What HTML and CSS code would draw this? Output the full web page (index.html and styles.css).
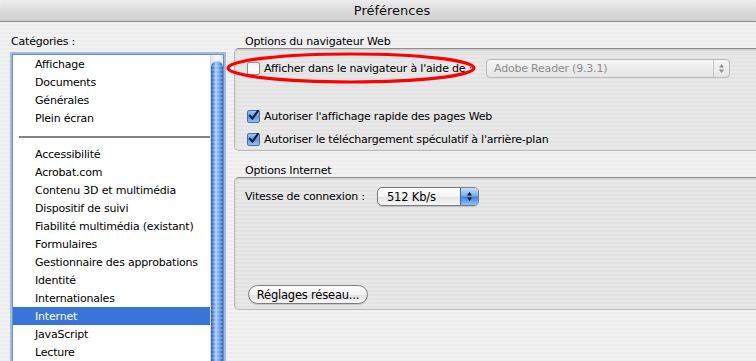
FILE: index.html
```html
<!DOCTYPE html>
<html lang="fr">
<head>
<meta charset="utf-8">
<title>Préférences</title>
<link rel="stylesheet" href="styles.css">
</head>
<body>
<div class="window">
  <div class="titlebar"><span class="title">Préférences</span></div>
  <div class="content">
    <div class="left">
      <div class="label">Catégories :</div>
      <div class="listbox">
        <ul class="items">
          <li>Affichage</li>
          <li>Documents</li>
          <li>Générales</li>
          <li>Plein écran</li>
          <li class="sep"><span></span></li>
          <li>Accessibilité</li>
          <li>Acrobat.com</li>
          <li>Contenu 3D et multimédia</li>
          <li>Dispositif de suivi</li>
          <li>Fiabilité multimédia (existant)</li>
          <li>Formulaires</li>
          <li>Gestionnaire des approbations</li>
          <li>Identité</li>
          <li>Internationales</li>
          <li class="selected">Internet</li>
          <li>JavaScript</li>
          <li>Lecture</li>
        </ul>
        <div class="scroll"><div class="thumb"></div></div>
      </div>
    </div>
    <div class="right">
      <div class="label group-label">Options du navigateur Web</div>
      <div class="group group-web">
        <div class="row row-first">
          <label class="check">
            <span class="box"></span>
            <span>Afficher dans le navigateur à l'aide de :</span>
          </label>
          <div class="popup popup-disabled">
            <span class="popup-text">Adobe Reader (9.3.1)</span>
            <span class="popup-arrows">
              <svg width="7" height="11" viewBox="0 0 7 11"><path d="M3.5 1 L6 4.5 H1 Z M3.5 10 L6 6.5 H1 Z" fill="#8f8f8f"/></svg>
            </span>
          </div>
        </div>
        <label class="check row row-second">
          <span class="box checked"><svg width="13" height="13" viewBox="0 0 13 13"><path d="M2.8 6.6 L5.4 9.6 L11 1.8" fill="none" stroke="#10203a" stroke-width="2.1" stroke-linecap="round" stroke-linejoin="round"/></svg></span>
          <span>Autoriser l'affichage rapide des pages Web</span>
        </label>
        <label class="check row row-third">
          <span class="box checked"><svg width="13" height="13" viewBox="0 0 13 13"><path d="M2.8 6.6 L5.4 9.6 L11 1.8" fill="none" stroke="#10203a" stroke-width="2.1" stroke-linecap="round" stroke-linejoin="round"/></svg></span>
          <span>Autoriser le téléchargement spéculatif à l'arrière-plan</span>
        </label>
      </div>
      <div class="label group-label group-label-2">Options Internet</div>
      <div class="group group-net">
        <div class="row speed-row">
          <span class="speed-label">Vitesse de connexion :</span>
          <div class="popup popup-active">
            <span class="popup-text">512 Kb/s</span>
            <span class="popup-arrows blue">
              <svg width="7" height="11" viewBox="0 0 7 11"><path d="M3.5 1 L6 4.5 H1 Z M3.5 10 L6 6.5 H1 Z" fill="#111"/></svg>
            </span>
          </div>
        </div>
        <button class="btn">Réglages réseau...</button>
      </div>
    </div>
  </div>
  <svg class="annotation" width="254" height="34" viewBox="0 0 254 34"><ellipse cx="126" cy="16" rx="123" ry="14" fill="none" stroke="#ff0000" stroke-width="3.2"/></svg>
</div>
</body>
</html>
```
FILE: styles.css
```css
html, body {
  margin: 0;
  padding: 0;
  width: 756px;
  height: 361px;
  overflow: hidden;
  background: #ffffff;
}

.window {
  position: relative;
  width: 756px;
  height: 361px;
  overflow: hidden;
  font-family: "DejaVu Sans", "Liberation Sans", sans-serif;
  font-size: 11px;
  letter-spacing: -0.2px;
  color: #000;
  background: repeating-linear-gradient(to bottom, #ededed 0 2px, #f2f2f2 2px 4px);
}

.titlebar {
  height: 21px;
  border-bottom: 1px solid #8c8c8c;
  border-radius: 5px 5px 0 0;
  background: linear-gradient(to bottom, #ececec, #dcdcdc 50%, #cfcfcf);
  display: flex;
  align-items: center;
  justify-content: center;
  padding-left: 28px;
  box-sizing: content-box;
}

.title {
  font-size: 13px;
  letter-spacing: 0;
  color: #111;
}

.content {
  display: flex;
  padding-top: 12px;
}

.label {
  line-height: 14px;
  height: 13px;
  padding-top: 1px;
}

.left {
  width: 222px;
  padding-left: 12px;
  flex: none;
}

.left .label {
  margin-left: -1px;
  margin-bottom: 6px;
}

.listbox {
  width: 210px;
  height: 320px;
  border: 1px solid #6f8fbd;
  box-shadow: 0 0 0 2px #9dbde6;
  background: #fff;
  display: flex;
}

.items {
  list-style: none;
  margin: 0;
  padding: 0;
  flex: 1;
}

.items li {
  height: 18px;
  line-height: 20px;
  padding-left: 22px;
  white-space: nowrap;
  box-sizing: border-box;
}

.items li.sep {
  padding-left: 6px;
  display: flex;
  align-items: center;
}

.items li.sep span {
  display: block;
  width: 100%;
  height: 2px;
  margin-top: 1px;
  background: #858585;
}

.items li.selected {
  background: #3875d7;
  color: #fff;
}

.scroll {
  width: 12px;
  flex: none;
  background: linear-gradient(to right, #e8e8e8, #fafafa 50%, #e8e8e8);
  border-left: 1px solid #d8d8d8;
}

.thumb {
  margin-top: 6px;
  height: 100%;
  border-radius: 6px 6px 0 0;
  background:
    repeating-linear-gradient(to bottom, rgba(255,255,255,0.18) 0 2px, rgba(0,0,0,0) 2px 4px),
    linear-gradient(to right, #2956a8, #4f88da 18%, #a9cdf8 40%, #7db0ef 62%, #4c86d8 85%, #2a5cae);
}

.right {
  width: 600px;
  flex: none;
}

.group-label {
  padding-left: 11px;
}

.group-label-2 {
  margin-top: 12px;
}

.group {
  border: 1px solid #b8b8b8;
  border-top-color: #8f8f8f;
  border-radius: 5px;
  background: repeating-linear-gradient(to bottom, #e3e3e3 0 2px, #e8e8e8 2px 4px);
  box-shadow: inset 0 1px 2px rgba(0,0,0,0.12);
  box-sizing: border-box;
}

.group-web {
  height: 103px;
  padding-left: 12px;
  display: flex;
  flex-direction: column;
}

.row {
  display: flex;
  align-items: center;
}

.row-first {
  margin-top: 9px;
  height: 20px;
  display: grid;
  grid-template-columns: 239px 244px;
  align-items: center;
}

.row-second {
  margin-top: 29px;
  height: 18px;
}

.row-third {
  margin-top: 5px;
  height: 18px;
}

.check {
  display: flex;
  align-items: center;
  white-space: nowrap;
}

.box {
  width: 11px;
  height: 11px;
  border: 1px solid #8d8d8d;
  border-radius: 2px;
  background: linear-gradient(to bottom, #f2f2f2, #ffffff 60%, #f4f4f4);
  margin-right: 4px;
  position: relative;
  flex: none;
}

.box.checked {
  border-color: #4d6f9e;
  background: linear-gradient(to bottom, #9fc6f5, #5f9ae6 50%, #8fc0f5);
}

.box svg {
  position: absolute;
  left: -1px;
  top: -2px;
}

.popup {
  height: 19px;
  box-sizing: border-box;
  border-radius: 4px;
  display: flex;
  align-items: center;
  overflow: hidden;
}

.popup-disabled {
  width: 244px;
  border: 1px solid #b9b9b9;
  background: linear-gradient(to bottom, #f6f6f6, #ececec 50%, #e6e6e6);
  color: #8d8d8d;
}

.popup-text {
  flex: 1;
  padding-left: 7px;
  white-space: nowrap;
}

.popup-arrows {
  width: 15px;
  height: 100%;
  border-left: 1px solid #c8c8c8;
  display: flex;
  align-items: center;
  justify-content: center;
}

.group-net {
  height: 133px;
  padding-left: 10px;
  padding-top: 9px;
}

.speed-row {
  height: 19px;
}

.speed-label {
  width: 132px;
  flex: none;
}

.popup-active {
  width: 102px;
  border: 1px solid #7b7b7b;
  border-radius: 5px;
  background: linear-gradient(to bottom, #ffffff, #f4f4f4 50%, #e4e4e4 55%, #f6f6f6);
  box-shadow: 0 1px 1px rgba(0,0,0,0.15);
  font-size: 11.5px;
}

.popup-active .popup-text {
  padding-left: 9px;
}

.popup-arrows.blue {
  width: 17px;
  border-left: 1px solid #3f67a5;
  background: linear-gradient(to bottom, #c9e0fb, #79aef0 45%, #3f86e2 55%, #8ec3f6);
}

.btn {
  display: block;
  margin-top: 79px;
  margin-left: 3px;
  width: 120px;
  height: 19px;
  padding: 0;
  border: 1px solid #7b7b7b;
  border-radius: 10px;
  background: linear-gradient(to bottom, #ffffff, #f3f3f3 50%, #e2e2e2 55%, #f7f7f7);
  box-shadow: 0 1px 1px rgba(0,0,0,0.15);
  font-family: "DejaVu Sans", "Liberation Sans", sans-serif;
  font-size: 11.5px;
  letter-spacing: -0.2px;
  color: #000;
  text-align: center;
}

.annotation {
  position: absolute;
  left: 225px;
  top: 52px;
}
```
